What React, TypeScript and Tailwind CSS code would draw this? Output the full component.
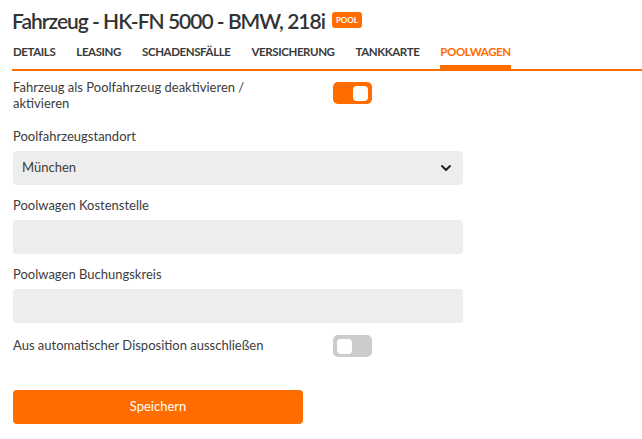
import { ChevronDown } from "lucide-react"

const tabs = ["Details", "Leasing", "Schadensfälle", "Versicherung", "Tankkarte", "Poolwagen"]

function Toggle({ on }: { on: boolean }) {
  return (
    <div
      className={`flex h-[22px] w-[39px] items-center rounded-[5px] px-[4px] ${
        on ? "justify-end bg-[#ff6c00]" : "justify-start bg-[#cccccc]"
      }`}
    >
      <div className="h-[15px] w-[15px] rounded-[4px] bg-white" />
    </div>
  )
}

function Field({ label, children }: { label: string; children?: React.ReactNode }) {
  return (
    <div className="flex flex-col">
      <label className="text-[13px] leading-[18px] text-[#3c3c3c]">{label}</label>
      <div className="mt-[6px] flex h-[34px] w-[450px] items-center justify-between rounded-[4px] bg-[#ededed] px-[9px] text-[13px] text-[#3c3c3c]">
        {children}
      </div>
    </div>
  )
}

export default function App() {
  return (
    <div className="min-h-screen bg-white font-['Lato',sans-serif] text-[#3a3a3a]">
      <div className="pl-[12px] pt-[7px]">
        <div className="flex items-center gap-[7px]">
          <h1 className="text-[21px] font-semibold leading-[28px] tracking-[-1px] text-[#333]">
            Fahrzeug - HK-FN 5000 - BMW, 218i
          </h1>
          <span className="mt-[-3px] rounded-[3px] bg-[#ff6c00] px-[4px] py-[3px] text-[8px] font-bold leading-[10px] text-white">
            POOL
          </span>
        </div>
        <nav className="mt-[8px] flex border-b-[2px] border-[#ff6c00] pl-[1px]">
          {tabs.map((t, i) => (
            <div
              key={t}
              className={`mr-[21px] border-b-[4px] pb-[4px] text-[11.5px] font-bold uppercase leading-[18px] tracking-[-0.4px] ${
                i === tabs.length - 1 ? "border-[#ff6c00] text-[#ff6c00]" : "border-transparent text-[#3a3a3a]"
              }`}
            >
              {t}
            </div>
          ))}
        </nav>
      </div>

      <div className="flex flex-col px-[13px] pt-[8px]">
        <div className="flex items-start">
          <div className="w-[245px] text-[13px] leading-[16px] text-[#3c3c3c]">
            Fahrzeug als Poolfahrzeug deaktivieren / aktivieren
          </div>
          <div className="ml-[75px] mt-[3px]">
            <Toggle on />
          </div>
        </div>

        <div className="mt-[16px] flex flex-col gap-[11px]">
          <Field label="Poolfahrzeugstandort">
            <span>München</span>
            <ChevronDown className="h-[16px] w-[16px] text-[#222]" strokeWidth={3} />
          </Field>
          <Field label="Poolwagen Kostenstelle" />
          <Field label="Poolwagen Buchungskreis" />
        </div>

        <div className="mt-[12px] flex items-center">
          <div className="w-[320px] text-[13px] text-[#3c3c3c]">Aus automatischer Disposition ausschließen</div>
          <Toggle on={false} />
        </div>

        <button className="mt-[33px] h-[34px] w-[290px] rounded-[4px] bg-[#ff6c00] text-[13px] text-white">
          Speichern
        </button>
      </div>
    </div>
  )
}
